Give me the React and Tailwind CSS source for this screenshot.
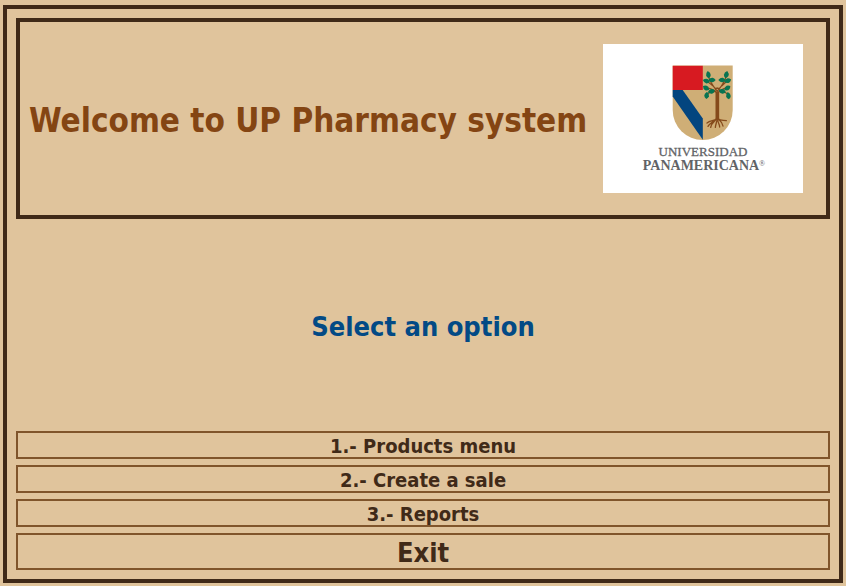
const MENU_ITEMS = ["1.- Products menu", "2.- Create a sale", "3.- Reports"];

// Leaf centres and angles, in the crest's tree coordinates.
const LEAVES = [
  [316, 92, 80], [310, 111, 15], [327, 108, 0], [309, 132, 35], [325, 142, -15], [311, 154, 95],
  [370, 92, 105], [357, 108, 0], [374, 110, -20], [373, 132, -35], [358, 142, 15], [376, 155, 80],
];

function UniversityLogo() {
  return (
    <svg
      viewBox="0 0 200 149"
      className="h-[149px] w-[200px] shrink-0 bg-white"
      role="img"
      aria-label="Universidad Panamericana"
    >
      <path d="M69.7 21.6H129.7V66A30 30 0 0 1 69.7 66Z" fill="#cfae76" />
      <path d="M69.7 21.8H99.8V46H69.7Z" fill="#d71a21" />
      <path d="M69.7 46H79.7L99.8 74.5V95.8L69.7 52.5Z" fill="#03457f" />
      <g transform="scale(.33333)">
        <g fill="none" stroke="#854a1b" strokeLinecap="round" strokeLinejoin="round">
          <path
            strokeWidth="3.5"
            d="M343 148C336 138 325 134 309 131M343 150C350 138 360 134 373 131M343 142C332 128 322 118 316 96M343 142C354 128 364 118 370 96M330 126C322 120 316 114 310 111M356 126C362 120 368 114 374 110M336 143C326 142 318 144 311 153M350 143C360 142 369 144 376 153M334 131C338 134 348 134 352 131"
          />
          <circle cx="343" cy="139" r="7" strokeWidth="3" />
          <path strokeWidth="11" strokeLinecap="butt" d="M343 145V226" />
          <path
            strokeWidth="4"
            d="M341 224C334 231 322 229 312 237M337 229C326 235 319 240 315 247M337 229C331 235 324 240 323 250M342 226C342 234 338 240 337 250M344 226C344 237 350 240 350 249M346 225C352 230 358 234 360 246M345 224C352 231 361 228 370 230"
          />
        </g>
        <g fill="#087451">
          {LEAVES.map(([x, y, angle]) => (
            <path
              key={`${x}-${y}`}
              d="M-11 0Q-5 -8 2 -7Q7 -6 11 0Q7 6 2 7Q-5 8 -11 0Z"
              transform={`translate(${x} ${y}) rotate(${angle})`}
            />
          ))}
        </g>
      </g>
      <g fill="#626366" className="font-['Liberation_Serif',serif] font-normal">
        <text x="100" y="112" textAnchor="middle" fontSize="13" stroke="#626366" strokeWidth=".3">
          UNIVERSIDAD
        </text>
        <text x="98" y="126" textAnchor="middle" fontSize="14" className="font-bold">
          PANAMERICANA
        </text>
        <text x="156" y="122" fontSize="8">
          ®
        </text>
      </g>
    </svg>
  );
}

export default function App() {
  return (
    <div className="flex min-h-screen flex-col bg-[#e0c49c] px-[3px] pt-[5px] pb-[3px] font-['DejaVu_Sans_Condensed','DejaVu_Sans',sans-serif] font-bold text-[#402a18]">
      <main className="flex grow flex-col gap-1.5 border-4 border-[#402a18] p-[9px]">
        <header className="flex items-center justify-between gap-3 border-4 border-[#402a18] py-[22px] pr-[23px] pl-[9px]">
          <h1 className="pt-1 text-[33px] leading-10 whitespace-nowrap text-[#844513]">
            Welcome to UP Pharmacy system
          </h1>
          <UniversityLogo />
        </header>
        <div className="flex grow items-center justify-center">
          <h2 className="pt-1 text-[27px] leading-8 text-[#034a85]">Select an option</h2>
        </div>
        <nav className="flex flex-col gap-1.5" aria-label="Main menu">
          {MENU_ITEMS.map((item) => (
            <button
              key={item}
              type="button"
              className="border-2 border-[#80552b] pt-0.5 text-[20px] leading-[22px]"
            >
              {item}
            </button>
          ))}
          <button
            type="button"
            className="border-2 border-[#80552b] pt-0.5 text-[27px] leading-[31px]"
          >
            Exit
          </button>
        </nav>
      </main>
    </div>
  );
}
